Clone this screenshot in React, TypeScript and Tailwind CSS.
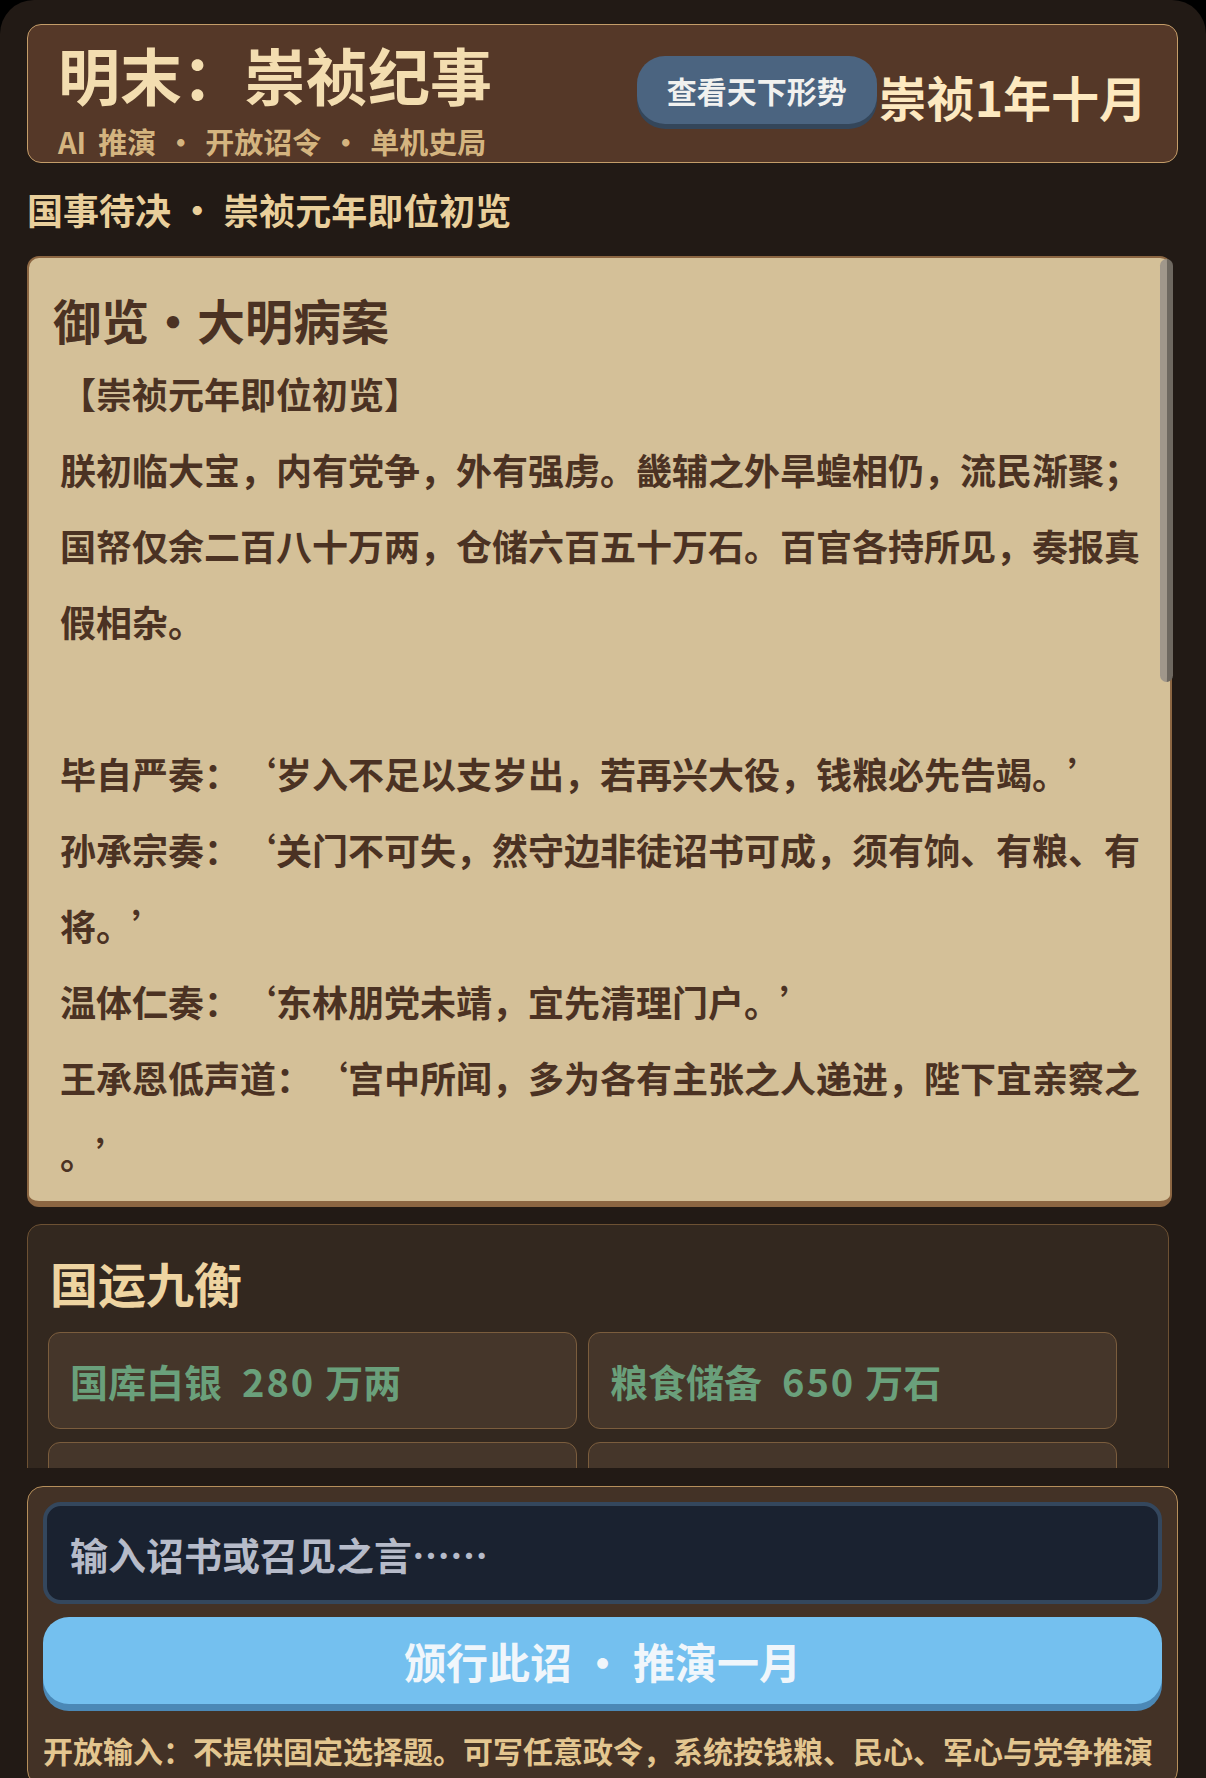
import { useState } from "react";

const memorial = [
  "【崇祯元年即位初览】",
  "朕初临大宝，内有党争，外有强虏。畿辅之外旱蝗相仍，流民渐聚；",
  "国帑仅余二百八十万两，仓储六百五十万石。百官各持所见，奏报真",
  "假相杂。",
  "",
  "毕自严奏：‘岁入不足以支岁出，若再兴大役，钱粮必先告竭。’",
  "孙承宗奏：‘关门不可失，然守边非徒诏书可成，须有饷、有粮、有",
  "将。’",
  "温体仁奏：‘东林朋党未靖，宜先清理门户。’",
  "王承恩低声道：‘宫中所闻，多为各有主张之人递进，陛下宜亲察之",
  "。’",
];

// second row is hidden under the edict bar, so it stays empty
const stats = [
  { label: "国库白银", value: "280", unit: "万两" },
  { label: "粮食储备", value: "650", unit: "万石" },
  { label: "", value: "", unit: "" },
  { label: "", value: "", unit: "" },
];

// full-width quote marks, as the original font draws them
function withQuotes(line: string) {
  return line.split(/([‘’])/).map((part, i) => {
    if (part === "‘")
      return (
        <span key={i} className="inline-block w-[1em] text-right">
          ‘
        </span>
      );
    if (part === "’")
      return (
        <span key={i} className="inline-block w-[1em] text-left">
          ’
        </span>
      );
    return part;
  });
}

export default function App() {
  const [edict, setEdict] = useState("");

  return (
    <div className="h-[1778px] w-full overflow-hidden bg-black font-['Noto_Sans_CJK_SC','Noto_Sans',sans-serif] font-bold">
      <div className="flex h-full flex-col rounded-t-[34px] bg-[#221a15] pl-[27px] pr-[28px]">
        <main className="h-[1468px] shrink-0 overflow-hidden pt-[24px]">
          {/* Title bar */}
          <header className="flex items-start justify-between rounded-[14px] border-[1.5px] border-[#c49d69] bg-[#553828] pb-[6px] pl-[30px] pr-[30px] pt-[18px]">
            <div>
              <h1 className="text-[62px] leading-none text-[#f3ddb0]">明末：崇祯纪事</h1>
              <p className="mt-[22px] text-[29px] leading-none text-[#d4b47f]">
                <span>AI</span>
                <span className="ml-[12px]">推演</span>
                <span className="mx-[10px]">・</span>
                <span>开放诏令</span>
                <span className="mx-[10px]">・</span>
                <span>单机史局</span>
              </p>
            </div>
            <div className="mt-[13px] flex items-center gap-[2px]">
              <button className="h-[68px] rounded-[28px] bg-[#4b6480] px-[30px] text-[30px] leading-none text-[#f1f1ef] shadow-[0_5px_0_#34465a]">
                查看天下形势
              </button>
              <span className="mt-[12px] text-[48px] leading-none text-[#fde9c0]">崇祯1年十月</span>
            </div>
          </header>

          <h2 className="mt-[28px] text-[36px] leading-none text-[#e9cf9b]">国事待决 ・ 崇祯元年即位初览</h2>

          {/* Memorial */}
          <section className="relative mr-[6px] mt-[29px] rounded-[12px] border-2 border-b-[6px] border-[#8c6642] bg-[#d4c098] px-[24px] pb-[10px] pt-[25px] text-[#4b3223]">
            <h3 className="text-[48px] leading-[72px]">御览・大明病案</h3>
            <div className="pl-[7px] text-[36px] leading-[76px]">
              {memorial.map((line, i) => (
                <div key={i} className="whitespace-nowrap">
                  {line ? withQuotes(line) : "\u00a0"}
                </div>
              ))}
            </div>
            <div className="absolute right-[-3px] top-[1px] h-[423px] w-[13px] rounded-full border-r-[6px] border-[#6e6860] bg-[#a0978b]" />
          </section>

          {/* Stats */}
          <section className="mr-[9px] mt-[17px] rounded-[14px] border-[1.5px] border-[#6d5133] bg-[#33281f] px-[20px] pb-[20px] pt-[33px]">
            <h3 className="ml-[2px] text-[48px] leading-none text-[#eed4a1]">国运九衡</h3>
            <div className="mt-[26px] grid w-[1069px] grid-cols-2 gap-x-[11px] gap-y-[13px]">
              {stats.map((s, i) => (
                <div
                  key={i}
                  className="flex h-[97px] items-center gap-[20px] rounded-[12px] border-[1.5px] border-[#7b5d3d] bg-[#45362a] px-[21px] text-[38px] leading-none text-[#6aa07b]"
                >
                  {s.label && <span>{s.label}</span>}
                  {s.value && (
                    <span>
                      <span className="tracking-[2px]">{s.value}</span>
                      <span className="ml-[10px]">{s.unit}</span>
                    </span>
                  )}
                </div>
              ))}
            </div>
          </section>
        </main>

        {/* Edict input */}
        <footer className="pt-[18px]">
          <div className="rounded-[16px] border-[1.5px] border-[#b68f5b] bg-[#433226] px-[15px] pb-[20px] pt-[15px]">
            <input
              value={edict}
              onChange={(e) => setEdict(e.target.value)}
              placeholder="输入诏书或召见之言……"
              className="h-[102px] w-full rounded-[18px] border-4 border-[#34475d] bg-[#1a2230] px-[23px] text-[38px] text-[#e5e7eb] outline-none placeholder:text-[#b6bbc9]"
            />
            <button className="mt-[13px] h-[87px] w-full rounded-[26px] bg-[#74c0ef] text-[42px] leading-none text-[#f0f6fb] shadow-[0_7px_0_#4b88b6]">
              颁行此诏 ・ 推演一月
            </button>
            <p className="mt-[31px] whitespace-nowrap text-[30px] leading-none text-[#e3c690]">
              开放输入：不提供固定选择题。可写任意政令，系统按钱粮、民心、军心与党争推演
            </p>
          </div>
        </footer>
      </div>
    </div>
  );
}
